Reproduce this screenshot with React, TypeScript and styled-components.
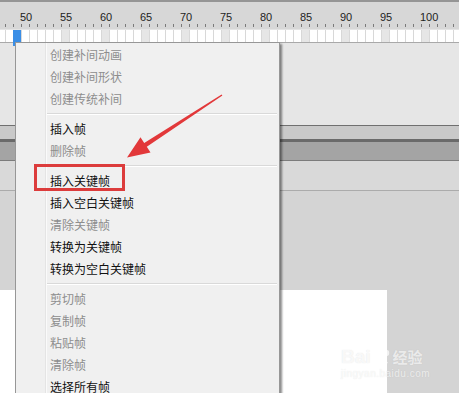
import styled, { createGlobalStyle } from 'styled-components';

const GlobalStyle = createGlobalStyle`
    html, body {
        margin: 0;
        padding: 0;
        overflow: hidden;
        background: #d4d4d4;
    }
`;

const labels = [50, 55, 60, 65, 70, 75, 80, 85, 90, 95, 100];
const cellCount = 57;

type Item = { text: string; on?: boolean; marked?: boolean } | 'sep';

const items: Item[] = [
    { text: '创建补间动画' },
    { text: '创建补间形状' },
    { text: '创建传统补间' },
    'sep',
    { text: '插入帧', on: true },
    { text: '删除帧' },
    'sep',
    { text: '插入关键帧', on: true, marked: true },
    { text: '插入空白关键帧', on: true },
    { text: '清除关键帧' },
    { text: '转换为关键帧', on: true },
    { text: '转换为空白关键帧', on: true },
    'sep',
    { text: '剪切帧' },
    { text: '复制帧' },
    { text: '粘贴帧' },
    { text: '清除帧' },
    { text: '选择所有帧', on: true },
];

const App = () => {
    return (
        <Page>
            <GlobalStyle />
            <TopEdge />
            <Ruler>
                <Labels>
                    {labels.map((n) => (
                        <Label key={n}>{n}</Label>
                    ))}
                </Labels>
                <Ticks>
                    {Array.from({ length: cellCount }).map((_, i) => (
                        <Tick key={i} />
                    ))}
                </Ticks>
            </Ruler>
            <FrameRow>
                {Array.from({ length: cellCount }).map((_, i) => (
                    <Cell key={i} $shade={i >= 7 && (i - 7) % 5 === 0} $active={i === 1} />
                ))}
            </FrameRow>
            <Band $bg="#e6e6e6" $h={82} />
            <Band $bg="#707070" $h={1} />
            <Band $bg="#c9c9c9" $h={13} />
            <Band $bg="#6a6a6a" $h={3} />
            <Band $bg="#a4a4a4" $h={18} />
            <Band $bg="#7c7c7c" $h={1} />
            <Band $bg="#d9d9d9" $h={29} />
            <Band $bg="#ababab" $h={1} />
            <Band $bg="#d4d4d4" $h={99} />
            <Stage>
                <Canvas />
                <Pasteboard />
            </Stage>

            <Menu>
                <Gutter />
                {items.map((it, i) =>
                    it === 'sep' ? (
                        <Separator key={i} />
                    ) : (
                        <MenuItem key={i} $on={!!it.on}>
                            {it.text}
                            {it.marked && <Mark />}
                        </MenuItem>
                    )
                )}
            </Menu>

            <Arrow width="459" height="393" viewBox="0 0 459 393">
                <polygon
                    points="222.4,95.6 221.6,94.4 144.2,143 140.5,137.3 127,157.5 150.5,152.5 146.8,146.8"
                    fill="#e2383a"
                />
            </Arrow>

            <Watermark>
                <Brand>
                    Bai
                    <Paw viewBox="0 0 20 20" width="20" height="20">
                        <ellipse cx="5" cy="6" rx="2.2" ry="3" />
                        <ellipse cx="10" cy="3.5" rx="2.2" ry="3" />
                        <ellipse cx="15" cy="6" rx="2.2" ry="3" />
                        <path d="M4 16 Q10 6 16 16 Q10 19 4 16 Z" />
                    </Paw>
                    <BrandCn>经验</BrandCn>
                </Brand>
                <Url>jingyan.baidu.com</Url>
            </Watermark>
        </Page>
    );
};

const Page = styled.div`
    position: relative;
    width: 459px;
    height: 393px;
    overflow: hidden;
    display: flex;
    flex-direction: column;
    background: #d4d4d4;
`;
const TopEdge = styled.div`
    height: 2px;
    flex-shrink: 0;
    background: #959595;
`;
const Ruler = styled.div`
    height: 27px;
    flex-shrink: 0;
    background: #d7d7d7;
    display: flex;
    flex-direction: column;
`;
const Labels = styled.div`
    display: flex;
    height: 20px;
    padding-left: 20px;
    padding-top: 9px;
    box-sizing: border-box;
`;
const Label = styled.div`
    width: 40px;
    flex-shrink: 0;
    font-family: "Liberation Sans", Arial, sans-serif;
    font-size: 11px;
    line-height: 12px;
    color: #1e1e1e;
`;
const Ticks = styled.div`
    display: flex;
    margin-top: 2px;
    padding-left: 5px;
    height: 3px;
`;
const Tick = styled.div`
    width: 8px;
    flex-shrink: 0;
    box-sizing: border-box;
    border-left: 1px solid #7a7a7a;
`;
const FrameRow = styled.div`
    display: flex;
    height: 14px;
    flex-shrink: 0;
    padding-left: 5px;
    background: #ffffff;
    border-top: 1px solid #e4e4e4;
    border-bottom: 1px solid #a9a9a9;
    box-sizing: border-box;
    position: relative;
`;
const Cell = styled.div<{ $shade: boolean; $active: boolean }>`
    width: 8px;
    flex-shrink: 0;
    box-sizing: border-box;
    border-left: 1px solid #d8d8d8;
    background: ${(p) => (p.$active ? '#3a8ee6' : p.$shade ? '#e6e6e6' : '#ffffff')};
    ${(p) => p.$active && 'height: 16px; border-left-color: #3a8ee6;'}
`;
const Band = styled.div<{ $bg: string; $h: number }>`
    height: ${(p) => p.$h}px;
    flex-shrink: 0;
    background: ${(p) => p.$bg};
`;
const Stage = styled.div`
    flex: 1;
    display: flex;
`;
const Canvas = styled.div`
    width: 387px;
    background: #ffffff;
`;
const Pasteboard = styled.div`
    flex: 1;
    background: #d4d4d4;
`;
const Menu = styled.div`
    position: absolute;
    left: 15px;
    top: 42px;
    width: 265px;
    height: 360px;
    box-sizing: border-box;
    padding-top: 1px;
    background: #f0f0f0;
    border: 1px solid #979797;
    box-shadow: 2px 2px 2px rgba(0, 0, 0, 0.45);
    font-family: "Noto Sans CJK SC", "Microsoft YaHei", sans-serif;
    font-size: 12px;
`;
const Gutter = styled.div`
    position: absolute;
    left: 29px;
    top: 0;
    bottom: 0;
    width: 1px;
    background: #e4e4e4;
    border-right: 1px solid #fafafa;
`;
const MenuItem = styled.div<{ $on: boolean }>`
    position: relative;
    height: 22px;
    line-height: 21px;
    padding-left: 34px;
    color: ${(p) => (p.$on ? '#111111' : '#8d8d8d')};
    white-space: nowrap;
`;
const Mark = styled.div`
    position: absolute;
    left: 18px;
    top: -6px;
    width: 91px;
    height: 27px;
    box-sizing: border-box;
    border: 3px solid #dc3c3c;
`;
const Separator = styled.div`
    height: 8px;
    margin-left: 31px;
    margin-right: 2px;
    position: relative;
    &::after {
        content: '';
        position: absolute;
        left: 0;
        right: 0;
        top: 3px;
        height: 1px;
        background: #d9d9d9;
        border-bottom: 1px solid #ffffff;
    }
`;
const Arrow = styled.svg`
    position: absolute;
    left: 0;
    top: 0;
    pointer-events: none;
`;
const Watermark = styled.div`
    position: absolute;
    left: 341px;
    top: 346px;
    display: flex;
    flex-direction: column;
    color: rgba(255, 255, 255, 0.75);
    text-shadow: 0 0 1px rgba(150, 150, 150, 0.3);
    opacity: 0.85;
`;
const Brand = styled.div`
    display: flex;
    align-items: center;
    font-family: "Liberation Sans", Arial, sans-serif;
    font-size: 19px;
    font-weight: bold;
    line-height: 22px;
`;
const Paw = styled.svg`
    fill: rgba(255, 255, 255, 0.8);
    margin: 0 1px;
`;
const BrandCn = styled.span`
    font-family: "Noto Sans CJK SC", sans-serif;
    font-size: 15px;
    font-weight: bold;
`;
const Url = styled.div`
    font-family: "Liberation Sans", Arial, sans-serif;
    font-size: 10px;
    line-height: 12px;
    letter-spacing: 0.5px;
`;

export default App;
